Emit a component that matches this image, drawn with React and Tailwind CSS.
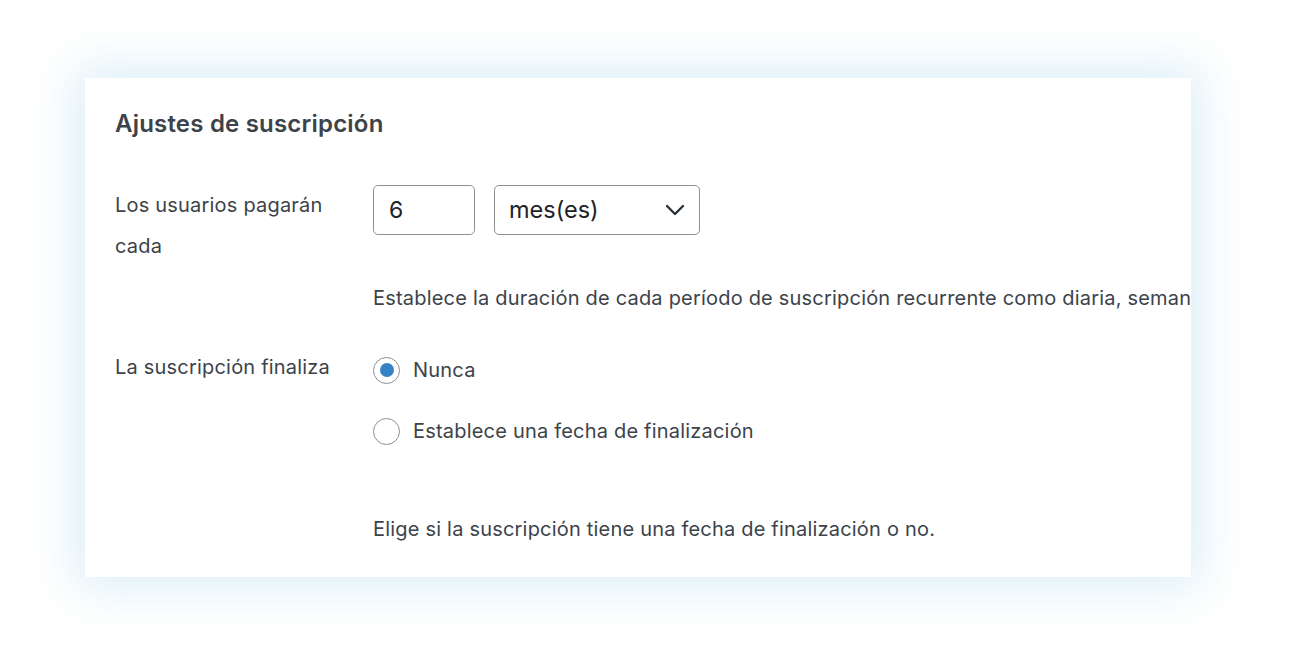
export default function App() {
  return (
    <div className="w-[1300px] h-[661px] bg-white overflow-hidden" style={{ fontFamily: 'Inter, "Noto Sans", sans-serif' }}>
      <div className="ml-[85px] mt-[78px] w-[1106px] h-[499px] bg-white overflow-hidden shadow-[0_0_45px_10px_rgba(190,225,240,0.55)] pl-[30px] pt-[108px] relative">
        <h2 className="absolute left-[30px] top-[30px] text-[24px] leading-[32px] font-semibold text-[#3c434a] tracking-[0.2px]">Ajustes de suscripción</h2>
        <div className="flex mt-[-1px]">
          <div className="w-[258px] shrink-0 text-[20px] leading-[41px] tracking-[0.2px] text-[#3c434a]">
            Los usuarios pagarán
            <br />
            cada
          </div>
          <div className="flex flex-col">
            <div className="flex gap-[19px]">
              <div className="w-[102px] h-[50px] border border-[#8c8f94] rounded-[5px] flex items-center pl-[15px] text-[23px] text-[#1d2327]">6</div>
              <div className="w-[206px] h-[50px] border border-[#8c8f94] rounded-[5px] flex items-center justify-between pl-[14px] pr-[14px] text-[23.5px] text-[#1d2327]">
                <span>mes(es)</span>
                <svg width="20" height="12" viewBox="0 0 20 12" fill="none">
                  <path d="M2 2 L10 10 L18 2" stroke="#2c3338" strokeWidth="2.4" strokeLinecap="round" strokeLinejoin="round" />
                </svg>
              </div>
            </div>
            <p className="mt-[49px] text-[20px] leading-[28px] tracking-[0.2px] text-[#3c434a] whitespace-nowrap">Establece la duración de cada período de suscripción recurrente como diaria, semanal, mensual o anual.</p>
          </div>
        </div>
        <div className="flex mt-[41px]">
          <div className="w-[258px] shrink-0 text-[20px] leading-[28px] tracking-[0.2px] text-[#3c434a]">La suscripción finaliza</div>
          <div className="flex flex-col">
            <div className="flex items-center gap-[13px] mt-[-7px] h-[48px]">
              <span className="w-[27px] h-[27px] rounded-full border-[1.5px] border-[#8c8f94] flex items-center justify-center">
                <span className="w-[14px] h-[14px] rounded-full bg-[#3582c4]" />
              </span>
              <span className="text-[20px] tracking-[0.2px] text-[#3c434a]">Nunca</span>
            </div>
            <div className="flex items-center gap-[13px] mt-[13px] h-[48px]">
              <span className="w-[27px] h-[27px] rounded-full border-[1.5px] border-[#8c8f94]" />
              <span className="text-[20px] tracking-[0.2px] text-[#3c434a]">Establece una fecha de finalización</span>
            </div>
            <p className="mt-[60px] text-[20px] leading-[28px] tracking-[0.2px] text-[#3c434a]">Elige si la suscripción tiene una fecha de finalización o no.</p>
          </div>
        </div>
      </div>
    </div>
  );
}
